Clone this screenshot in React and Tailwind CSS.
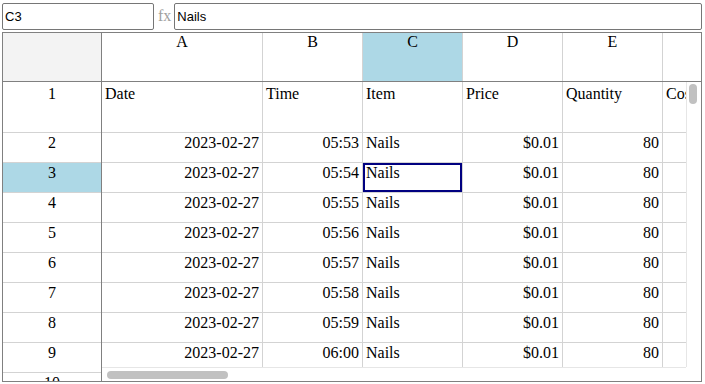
import React from 'react';

const columns = [
  { key: 'A', width: 'w-[161px]' },
  { key: 'B', width: 'w-[100px]' },
  { key: 'C', width: 'w-[100px]' },
  { key: 'D', width: 'w-[100px]' },
  { key: 'E', width: 'w-[100px]' },
  { key: 'F', width: 'w-[100px]' },
];

const times = ['05:53', '05:54', '05:55', '05:56', '05:57', '05:58', '05:59', '06:00'];

const rows = [
  { n: 1, header: true, cells: ['Date', 'Time', 'Item', 'Price', 'Quantity', 'Cost'] },
  ...times.map((t, i) => ({
    n: i + 2,
    cells: ['2023-02-27', t, 'Nails', '$0.01', '80', '$0.80'],
  })),
  { n: 10, cells: ['2023-02-27', '06:01', 'Nails', '$0.01', '80', '$0.80'] },
];

// Item column is text, the rest right aligned
const leftAligned = [false, false, true, false, false, false];

export default function App() {
  return (
    <div className="h-[384px] w-[705px] overflow-hidden bg-white p-[2px] pr-[3px] font-['Liberation_Serif',serif] text-[16px] text-black">
      {/* formula bar */}
      <div className="flex h-[28px] items-center">
        <input
          readOnly
          value="C3"
          className="h-[27px] w-[152px] rounded-[2px] border border-[#767676] px-[2px] font-['Liberation_Sans',Arial,sans-serif] text-[13px] outline-none"
        />
        <span className="ml-[4px] mr-[3px] text-[16px] text-[#a0a0a0]">fx</span>
        <input
          readOnly
          value="Nails"
          className="h-[27px] min-w-0 flex-1 rounded-[2px] border border-[#767676] px-[2px] font-['Liberation_Sans',Arial,sans-serif] text-[13px] outline-none"
        />
      </div>

      {/* grid */}
      <div className="mt-[2px] flex h-[350px] overflow-hidden border border-[#808080] leading-[18px]">
        {/* row headers */}
        <div className="flex w-[99px] shrink-0 flex-col overflow-hidden border-r border-[#808080]">
          <div className="h-[49px] shrink-0 border-b border-[#808080] bg-[#f3f3f3]" />
          {rows.map((r) => (
            <div
              key={r.n}
              className={`${r.header ? 'h-[51px] pt-[3px]' : 'h-[30px] pt-[1px]'} shrink-0 border-b border-[#d3d3d3] text-center ${r.n === 3 ? 'bg-[#add8e6]' : ''}`}
            >
              {r.n}
            </div>
          ))}
        </div>

        {/* columns + body */}
        <div className="flex min-w-0 flex-1 flex-col overflow-hidden">
          <div className="flex h-[49px] shrink-0 border-b border-[#808080]">
            {columns.map((c) => (
              <div
                key={c.key}
                className={`${c.width} shrink-0 border-r border-[#d3d3d3] text-center ${c.key === 'C' ? 'bg-[#add8e6]' : ''}`}
              >
                {c.key}
              </div>
            ))}
          </div>

          <div className="relative min-h-0 flex-1 overflow-hidden">
            {rows.map((r) => (
              <div key={r.n} className={`flex ${r.header ? 'h-[51px]' : 'h-[30px]'} shrink-0`}>
                {columns.map((c, i) => {
                  const selected = r.n === 3 && c.key === 'C';
                  return (
                    <div
                      key={c.key}
                      className={`relative ${c.width} shrink-0 overflow-hidden whitespace-nowrap border-b border-r border-[#d3d3d3] px-[3px] ${
                        r.header ? 'pt-[3px]' : 'pt-[1px]'
                      } ${r.header || leftAligned[i] ? 'text-left' : 'text-right'}`}
                    >
                      {r.cells[i]}
                      {selected && <div className="absolute inset-0 border-2 border-[#000080]" />}
                    </div>
                  );
                })}
              </div>
            ))}

            {/* vertical scrollbar */}
            <div className="absolute bottom-[14px] right-0 top-0 w-[15px] border-l border-[#e6e6e6] bg-white">
              <div className="ml-[2px] mt-[2px] h-[20px] w-[8px] rounded-full bg-[#c1c1c1]" />
            </div>
            {/* horizontal scrollbar */}
            <div className="absolute bottom-0 left-0 right-[15px] h-[14px] border-t border-[#e6e6e6] bg-white">
              <div className="ml-[5px] mt-[3px] h-[8px] w-[121px] rounded-full bg-[#c1c1c1]" />
            </div>
            <div className="absolute bottom-0 right-0 h-[14px] w-[15px] bg-white" />
          </div>
        </div>
      </div>
    </div>
  );
}
